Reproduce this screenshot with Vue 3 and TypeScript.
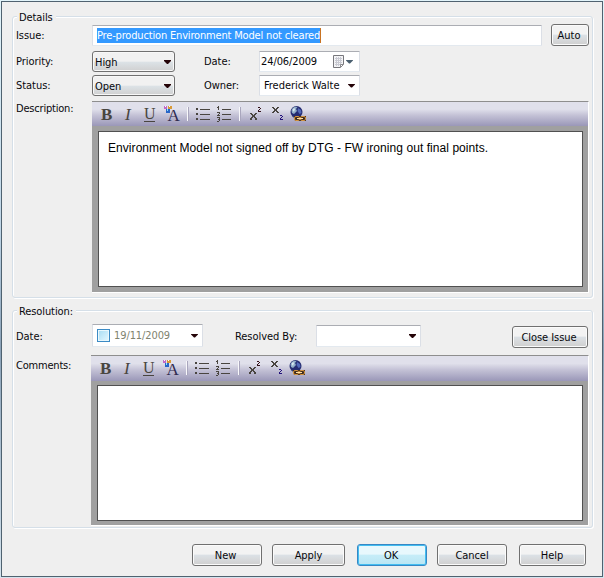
<script setup lang="ts">
import { ref } from 'vue'

interface Section {
  id: 'details' | 'resolution'
  legend: string
  body: string
}

const sections: Section[] = [
  { id: 'details', legend: 'Details', body: 'Environment Model not signed off by DTG - FW ironing out final points.' },
  { id: 'resolution', legend: 'Resolution:', body: '' },
]

const tools = ['bold', 'italic', 'underline', 'font', 'sep', 'bullets', 'numbers', 'sep', 'sup', 'sub', 'link']
const actions = ['New', 'Apply', 'OK', 'Cancel', 'Help']
const issue = ref('Pre-production Environment Model not cleared')
</script>

<template>
  <div class="desktop">
    <main class="dialog">
      <section v-for="s in sections" :key="s.id" class="group" :class="s.id">
        <span class="legend">{{ s.legend }}</span>

        <template v-if="s.id === 'details'">
          <div class="row issue-row">
            <label>Issue:</label>
            <div class="field issue"><span class="selected">{{ issue }}</span></div>
            <button class="btn">Auto</button>
          </div>
          <div class="row pair first">
            <label>Priority:</label>
            <div class="combo"><span>High</span><i class="arrow"></i></div>
            <label class="second">Date:</label>
            <div class="field date">
              <span class="digits">24/06/2009</span>
              <svg class="calendar" width="12" height="13" viewBox="0 0 12 13">
                <path d="M.5.5h10v9l-3 3h-7z" fill="#f4f4f6" stroke="#77777c" />
                <path d="M2 3.5h7M2 5.5h7M2 7.5h7M2 9.5h5M3.5 2v9M5.5 2v9M7.5 2v8" stroke="#c9cad2" fill="none" />
                <path d="M7.5 12V9.5H10" fill="#fff" stroke="#88888c" />
              </svg>
              <i class="arrow blue"></i>
            </div>
          </div>
          <div class="row pair">
            <label>Status:</label>
            <div class="combo"><span>Open</span><i class="arrow"></i></div>
            <label class="second">Owner:</label>
            <div class="field owner"><span>Frederick Walte</span><i class="arrow"></i></div>
          </div>
        </template>

        <div v-else class="row resolve-row">
          <label>Date:</label>
          <div class="field closed"><i class="check"></i><span class="digits">19/11/2009</span><i class="arrow"></i></div>
          <label class="second">Resolved By:</label>
          <div class="field resolver"><i class="arrow"></i></div>
          <button class="btn">Close Issue</button>
        </div>

        <div class="row editor-row">
          <label>{{ s.id === 'details' ? 'Description:' : 'Comments:' }}</label>
          <div class="editor">
            <div class="toolbar">
              <span v-for="(t, i) in tools" :key="i" class="tool" :class="t">
                <svg v-if="t !== 'sep'" width="20" height="20" viewBox="0 0 20 20">
                  <text v-if="t === 'bold'" class="serif b" x="4" y="17">B</text>
                  <text v-else-if="t === 'italic'" class="serif it" x="7" y="17">I</text>
                  <g v-else-if="t === 'underline'">
                    <text class="serif u" x="5" y="16">U</text>
                    <path d="M5 18.5h11" stroke="#494540" />
                  </g>
                  <g v-else-if="t === 'font'">
                    <text class="serif a" x="5.5" y="18">A</text>
                    <g shape-rendering="crispEdges">
                      <path d="M2 3h3v3H2z" fill="#c06ac8" />
                      <path d="M6 3h4v3H6z" fill="#d99a38" />
                      <path d="M3 3h1v1H3zM7 3h1v1H7z" fill="#fff" />
                      <path d="M4 6h4v4H4z" fill="#2865c8" />
                      <path d="M5 6h1v2H5z" fill="#8ee0f8" />
                    </g>
                  </g>
                  <g v-else-if="t === 'bullets'" shape-rendering="crispEdges">
                    <path d="M7 6.5h10M7 11.5h10M7 16.5h10" stroke="#494540" />
                    <path d="M3 5h2v2H3zM3 10h2v2H3zM3 15h2v2H3z" fill="#494540" />
                  </g>
                  <g v-else-if="t === 'numbers'" shape-rendering="crispEdges" fill="none" stroke="#494540">
                    <path d="M8 6.5h9M8 11.5h9M8 16.5h9" />
                    <path d="M4.5 3v4M3 4.5h1M3 9.5h2M5.5 9v2M4.5 11v1M3 12.5h3M3 14.5h3M4 16.5h1M5.5 15v3M3 18.5h2" />
                  </g>
                  <g v-else-if="t === 'sup'" shape-rendering="crispEdges">
                    <path d="M4 10h2v1H4zM9 10h2v1H9zM5 11h2v1H5zM8 11h2v1H8zM6 12h3v2H6zM5 14h2v1H5zM8 14h2v1H8zM4 15h2v2H4zM9 15h2v2H9z" fill="#494540" />
                    <path d="M12 4h2v1h-2zM14 5h1v1h-1zM13 6h1v1h-1zM12 7h1v1h-1zM12 8h3v1h-3z" fill="#35121b" />
                  </g>
                  <g v-else-if="t === 'sub'" shape-rendering="crispEdges">
                    <path d="M4 4h2v1H4zM9 4h2v1H9zM5 5h2v1H5zM8 5h2v1H8zM6 6h3v2H6zM5 8h2v1H5zM8 8h2v1H8zM4 9h2v1H4zM9 9h2v1H9z" fill="#494540" />
                    <path d="M12 12h2v1h-2zM14 13h1v1h-1zM13 14h1v1h-1zM12 15h1v1h-1zM12 16h3v1h-3z" fill="#22107c" />
                  </g>
                  <g v-else>
                    <circle cx="8.5" cy="9" r="6" fill="#252c72" />
                    <path d="M3.5 7.5Q5 3 9.5 4L8 6l1 2-3 3-2-1z" fill="#91afc8" />
                    <path d="M4.5 7L6 5l1 1-1 3z" fill="#dceaf2" />
                    <path d="M10 5l3 2 .5 3-2 1-2-3z" fill="#5269b8" />
                    <path d="M4 13l5 2.5-3-.2z" fill="#68788d" />
                    <path d="M6 13h12v5H7z" fill="#402c1e" />
                    <rect x="6.5" y="13.5" width="5" height="4" rx="1.5" fill="none" stroke="#d5943f" />
                    <rect x="12.5" y="13.5" width="5" height="4" rx="1.5" fill="none" stroke="#d5943f" />
                    <path d="M9 15.5h6" stroke="#ffe1a3" />
                  </g>
                </svg>
              </span>
            </div>
            <div class="page">{{ s.body }}</div>
          </div>
        </div>
      </section>

      <footer>
        <button v-for="a in actions" :key="a" class="btn" :class="a.toLowerCase()">{{ a }}</button>
      </footer>
    </main>
  </div>
</template>

<style>
body { background: #e3f0f6; overflow: hidden; }
</style>

<style scoped>
* { box-sizing: border-box; }
.desktop {
  width: 604px; height: 578px; padding: 1px; overflow: hidden;
  background: linear-gradient(#e2f4fa, #bfd5e6 40%, #8aa1b7 60%, #d5e4ee);
  font: 11px/14px "DejaVu Sans Condensed", "DejaVu Sans", sans-serif;
  letter-spacing: -0.05px; color: #08080c;
}
.dialog {
  width: 602px; height: 576px; padding: 14px 9px 0 10px;
  border: 1px solid #4f6270; background: #efefef;
}
.group {
  position: relative; width: 581px; padding: 7px 3px 0 0;
  border: 1px solid #d5dfe8; border-radius: 3px;
  box-shadow: inset 1px 1px #fff, 1px 1px #fff;
}
.details { height: 282px; }
.resolution { height: 218px; margin-top: 12px; padding-top: 13px; }
.legend { position: absolute; left: 4px; top: -7px; padding: 1px 3px 0 2px; background: #efefef; letter-spacing: -0.1px; }
.row { display: flex; height: 22px; white-space: nowrap; }
label { width: 79px; padding: 4px 0 0 3px; flex: none; }
.issue-row label { padding-top: 5px; }
.field {
  display: flex; align-items: center; flex: none; height: 21px;
  background: #fff; border: 1px solid; border-color: #abadb3 #dbdfe6 #e3e9ef #dbdfe6; border-radius: 1px;
}
.issue { width: 450px; margin: 1px 9px 0 0; padding-left: 4px; }
.selected {
  width: 224px; height: 15px; line-height: 15px; overflow: hidden;
  background: #3399ff; color: #fff; border-right: 1px solid #c87322; letter-spacing: -0.17px;
}
.btn {
  flex: none; height: 22px; padding: 1px 0 0; border: 1px solid #707070; border-radius: 3px;
  background: linear-gradient(#f3f3f3 0 46%, #dbe1e6 50%, #d9dcdf 65%, #cfcfcf);
  box-shadow: inset 0 0 0 1px #fbfbfb; font: inherit; letter-spacing: inherit; color: inherit;
}
.issue-row .btn { width: 38px; padding-right: 2px; }
.first { margin: 5px 0 2px; }
.combo {
  display: flex; align-items: center; flex: none; width: 83px; height: 21px; padding: 1px 3px 0 2px;
  border: 1px solid #707070; border-radius: 3px; box-shadow: inset 0 0 0 1px #f8f8f8;
  background: linear-gradient(#f1f1f1 0 48%, #dce2e6 54%, #d0d0d0);
}
.combo span, .date .digits { padding-top: 1px; }
.arrow {
  flex: none; width: 7px; height: 4px; margin-left: auto; background: #250408;
  clip-path: polygon(0 0, 100% 0, 100% 25%, 57% 100%, 43% 100%, 0 25%);
}
.arrow.blue { margin-left: 1px; background: #4b6070; }
.pair .second { width: 84px; padding-left: 29px; }
.date, .owner { width: 101px; }
.date { padding-left: 1px; }
.owner { padding: 0 4px; }
.digits { width: 57px; letter-spacing: -0.1px; }
.calendar { margin-left: 15px; }
.editor-row { height: auto; margin-top: 4px; }
.editor-row label { letter-spacing: -0.2px; }
.details .editor-row label { padding-top: 1px; }
.editor {
  width: 497px; height: 192px; padding: 0 5px 6px 6px; background: #a0a0a0;
  border-top: 1px solid #8e8e8e; border-right: 1px solid #fff; border-bottom: 1px solid #fff;
}
.toolbar {
  display: flex; height: 24px; margin: 0 -5px 0 -6px; padding: 1px 0 0 5px;
  background: linear-gradient(#e0e0eb 0 30%, #c4c2d6 55%, #9a97b8);
}
.tool { width: 20px; height: 20px; margin-right: 1px; }
.tool svg { display: block; overflow: visible; }
.tool.underline { margin-right: 3px; }
.tool.font { margin-right: 5px; }
.tool.sep { width: 2px; height: 14px; margin: 4px 4px 0 0; background: linear-gradient(90deg, #f8f8fb 50%, #a9a6bd 50%); }
.tool.numbers { margin-right: 5px; }
.tool.sep ~ .sep { margin-right: 5px; }
.tool.sup { margin-right: 2px; }
.tool.sub { margin-right: 0; }
.serif { font-family: "Liberation Serif", serif; font-size: 17px; fill: #494540; letter-spacing: 0; }
.b { font-weight: bold; }
.it { font-style: italic; }
.u { font-size: 16px; }
.a { fill: #302b50; font-size: 17px; }
.page {
  height: 156px; margin-top: 5px; padding: 8px 9px; border: 1px solid #505050; background: #fff;
  font: 12px/16px "Liberation Sans", Arial, sans-serif; letter-spacing: 0.06px; color: #000;
}
.resolve-row { height: 25px; }
.resolve-row label { padding-top: 6px; }
.closed { width: 111px; height: 23px; padding: 0 4px; color: #80836f; }
.check {
  width: 13px; height: 13px; margin-right: 4px; border: 1px solid #3c8bc5; box-shadow: inset 0 0 0 1px #e9f8fd;
  background: linear-gradient(135deg, #a6dcf3, #e5f8ff);
}
.resolve-row .second { width: 113px; padding-left: 32px; }
.resolver { width: 105px; height: 22px; margin-top: 1px; padding-right: 4px; }
.resolve-row .btn { width: 76px; margin: 2px 0 0 91px; padding-right: 2px; }
.resolution .editor-row { margin-top: 6px; }
.resolution .editor-row label { width: 78px; padding-top: 4px; }
.resolution .editor { width: 498px; height: 171px; }
.resolution .toolbar { height: 25px; }
.resolution .page { height: 136px; margin-top: 4px; }
footer { display: flex; height: 22px; margin: 16px 0 0 180px; gap: 10px; }
footer .btn { width: 70px; }
footer .new { padding-right: 3px; }
footer .apply { width: 73px; }
footer .ok {
  margin-left: 2px; padding-right: 2px; border-color: #3788c5; box-shadow: inset 0 0 0 1px #43bdf0;
  background: linear-gradient(#e8f8fd 0 46%, #c6edf8 50%, #b9e5f3);
}
footer .cancel { padding-right: 0; }
footer .help { width: 67px; margin-left: 2px; padding-right: 1px; }
</style>
